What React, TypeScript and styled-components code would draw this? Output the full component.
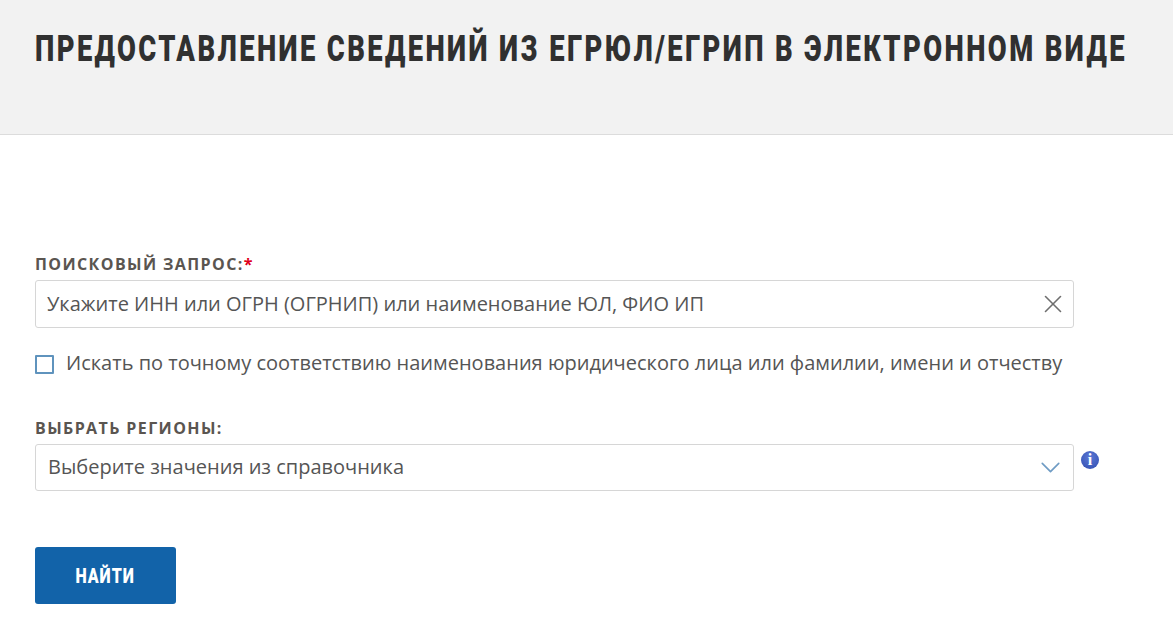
import styled, { createGlobalStyle } from "styled-components";
import { X, ChevronDown } from "lucide-react";

const GlobalStyle = createGlobalStyle`
  html, body {
    margin: 0;
    padding: 0;
    background: #ffffff;
    font-family: "Open Sans", "Liberation Sans", sans-serif;
    color: #555555;
  }
`;

const App = () => {
  return (
    <Page>
      <GlobalStyle />
      <Header>
        <Title>Предоставление сведений из ЕГРЮЛ/ЕГРИП в электронном виде</Title>
      </Header>
      <Form>
        <QueryField>
          <Label>
            Поисковый запрос:<Required>*</Required>
          </Label>
          <InputBox>
            <InputText>Укажите ИНН или ОГРН (ОГРНИП) или наименование ЮЛ, ФИО ИП</InputText>
            <X size={30} strokeWidth={1.3} color="#6f6f6f" />
          </InputBox>
        </QueryField>
        <CheckRow>
          <CheckBox />
          <CheckText>
            Искать по точному соответствию наименования юридического лица или фамилии, имени и отчеству
          </CheckText>
        </CheckRow>
        <RegionField>
          <Label>Выбрать регионы:</Label>
          <SelectRow>
            <SelectBox>
              <SelectText>Выберите значения из справочника</SelectText>
              <ChevronDown size={33} strokeWidth={1.2} color="#6f9cc4" />
            </SelectBox>
            <InfoIcon>i</InfoIcon>
          </SelectRow>
        </RegionField>
        <SearchButton>
          <ButtonLabel>Найти</ButtonLabel>
        </SearchButton>
      </Form>
    </Page>
  );
};

export default App;

const Page = styled.div`
  width: 1173px;
  height: 630px;
  overflow: hidden;
`;

const Header = styled.header`
  height: 134px;
  background: #f2f2f2;
  border-bottom: 1px solid #dcdcdc;
  padding: 0 35px;
`;

const Title = styled.h1`
  margin: 0;
  padding-top: 27px;
  font-family: "Roboto", "Liberation Sans", sans-serif;
  font-size: 36px;
  line-height: 44px;
  font-weight: 900;
  letter-spacing: 3.17px;
  text-transform: uppercase;
  white-space: nowrap;
  color: #303030;
  transform: scaleX(0.76);
  transform-origin: left center;
`;

const Form = styled.main`
  display: flex;
  flex-direction: column;
  padding: 119px 0 0 35px;
`;

const Label = styled.label`
  display: block;
  font-size: 16px;
  line-height: 20px;
  font-weight: 700;
  letter-spacing: 1.4px;
  text-transform: uppercase;
  color: #5a5550;
`;

const Required = styled.span`
  color: #e0001b;
`;

const QueryField = styled.div`
  display: flex;
  flex-direction: column;
  gap: 6px;
`;

const InputBox = styled.div`
  box-sizing: border-box;
  width: 1039px;
  height: 48px;
  display: flex;
  align-items: center;
  justify-content: space-between;
  padding: 0 5px 0 11px;
  border: 1px solid #d6d6d6;
  border-radius: 3px;
`;

const InputText = styled.span`
  font-size: 20px;
  padding-bottom: 2px;
  color: #555555;
`;

const CheckRow = styled.div`
  display: flex;
  align-items: center;
  gap: 12px;
  margin-top: 22px;
`;

const CheckBox = styled.span`
  box-sizing: border-box;
  width: 19px;
  height: 19px;
  border: 2px solid #5f93bd;
  border-radius: 1px;
`;

const CheckText = styled.span`
  font-size: 20px;
  line-height: 26px;
  padding-bottom: 2px;
  white-space: nowrap;
  color: #555555;
`;

const RegionField = styled.div`
  display: flex;
  flex-direction: column;
  gap: 6px;
  margin-top: 40px;
`;

const SelectRow = styled.div`
  display: flex;
  align-items: flex-start;
  gap: 7px;
`;

const SelectBox = styled.div`
  box-sizing: border-box;
  width: 1039px;
  height: 47px;
  display: flex;
  align-items: center;
  justify-content: space-between;
  padding: 0 6px 0 12px;
  border: 1px solid #d6d6d6;
  border-radius: 3px;
`;

const SelectText = styled.span`
  font-size: 20px;
  padding-bottom: 2px;
  color: #555555;
`;

const InfoIcon = styled.span`
  width: 18px;
  height: 18px;
  margin-top: 7px;
  border-radius: 50%;
  background: radial-gradient(circle at 50% 35%, #5c79d6, #2f4caf);
  color: #ffffff;
  font-family: "Liberation Serif", serif;
  font-weight: 700;
  font-size: 16px;
  line-height: 18px;
  text-align: center;
`;

const SearchButton = styled.button`
  width: 141px;
  height: 57px;
  margin-top: 56px;
  border: none;
  border-radius: 3px;
  background: #1263a9;
  color: #ffffff;
`;

const ButtonLabel = styled.span`
  display: inline-block;
  font-family: "Roboto", "Liberation Sans", sans-serif;
  font-size: 20px;
  font-weight: 900;
  letter-spacing: 1.2px;
  text-transform: uppercase;
  transform: scaleX(0.8);
`;
